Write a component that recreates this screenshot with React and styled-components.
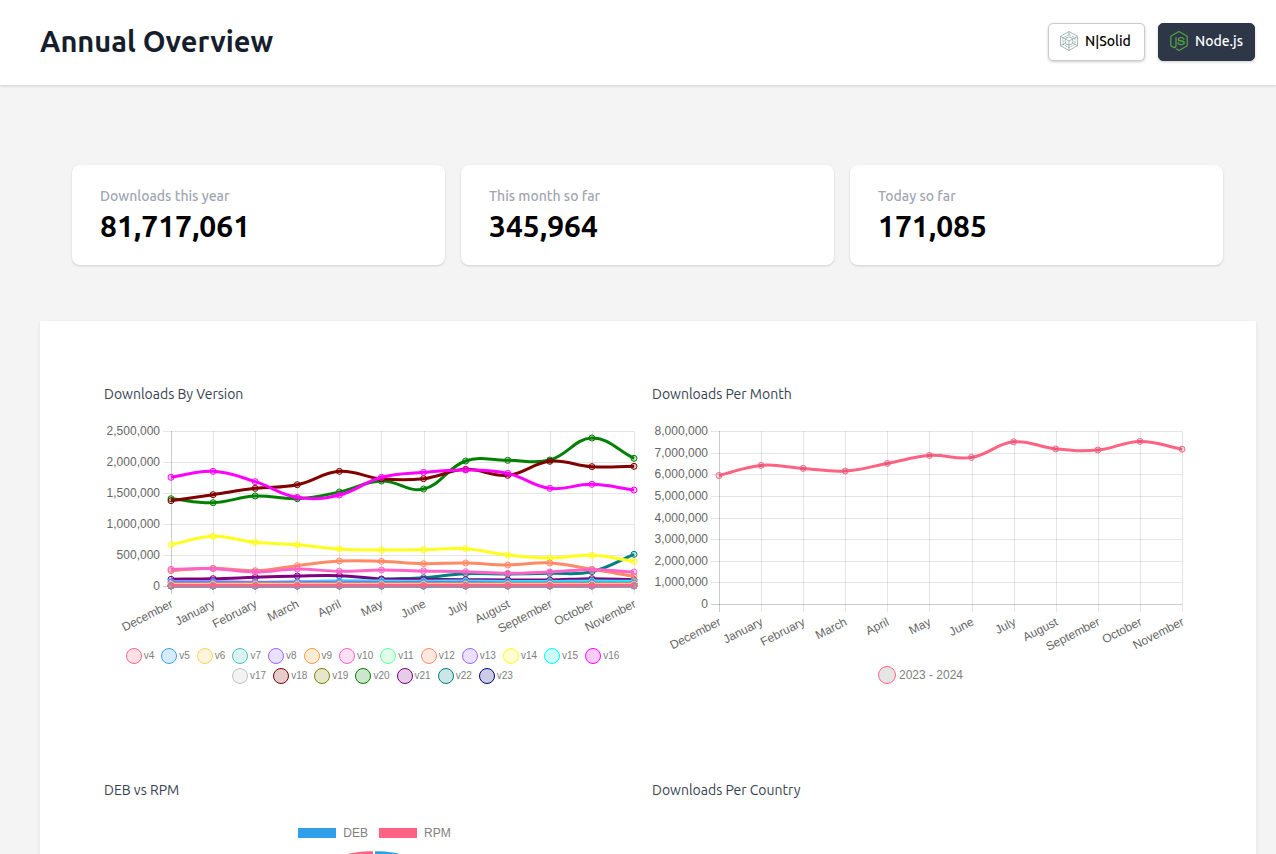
import React from 'react';
import styled, { createGlobalStyle } from 'styled-components';
import { SiNodedotjs } from 'react-icons/si';

const GlobalStyle = createGlobalStyle`
  * {
    box-sizing: border-box;
  }

  body {
    margin: 0;
    background-color: #f4f4f4;
    color: #000;
    font-family: Ubuntu, 'Noto Sans', sans-serif;
  }
`;

const Header = styled.header`
  display: flex;
  align-items: center;
  justify-content: space-between;
  padding: 23px 21px 24px 40px;
  background-color: white;
  box-shadow: 0 1px 3px rgba(0, 0, 0, 0.1), 0 1px 2px rgba(0, 0, 0, 0.06);
`;

const PageTitle = styled.h1`
  margin: 0;
  padding-bottom: 2px;
  font-size: 29px;
  line-height: 36px;
  font-weight: 600;
  color: #161e2e;
`;

const ProductSwitch = styled.nav`
  display: flex;
  gap: 13px;
`;

const ProductButton = styled.button`
  display: flex;
  align-items: center;
  gap: 6px;
  min-width: 97px;
  height: 38px;
  padding: 0 11px 2px 10px;
  border: 1px solid ${(props) => (props.$active ? '#2d3748' : '#cbcbcb')};
  border-radius: 5px;
  background-color: ${(props) => (props.$active ? '#2d3748' : 'white')};
  color: ${(props) => (props.$active ? 'white' : 'black')};
  box-shadow: 0 1px 3px rgba(0, 0, 0, 0.2);
  font-family: inherit;
  font-size: 14px;
  font-weight: 500;
`;

const Main = styled.main`
  padding: 80px 20px 0 40px;
`;

const Stats = styled.section`
  display: grid;
  grid-template-columns: repeat(3, 1fr);
  gap: 16px;
  padding: 0 33px 0 32px;
  margin-bottom: 56px;
`;

const StatCard = styled.div`
  height: 100px;
  padding: 20px 28px;
  border-radius: 8px;
  background-color: white;
  box-shadow: 0 1px 3px rgba(0, 0, 0, 0.1), 0 1px 2px rgba(0, 0, 0, 0.06);
`;

const StatLabel = styled.div`
  font-size: 14px;
  line-height: 22px;
  font-weight: 500;
  color: #9fa6b2;
`;

const StatValue = styled.div`
  font-size: 30px;
  line-height: 38px;
  font-weight: 600;
`;

const Panel = styled.section`
  display: grid;
  grid-template-columns: repeat(2, 1fr);
  gap: 84px 16px;
  padding: 62px 72px 64px 64px;
  background-color: white;
  box-shadow: 0 1px 3px rgba(0, 0, 0, 0.1);
`;

const Card = styled.article`
  min-height: 312px;
`;

const CardTitle = styled.h2`
  margin: 0 0 20px;
  font-size: 14px;
  line-height: 22px;
  font-weight: 400;
  color: #374151;
`;

const Chart = styled.svg`
  display: block;
  width: 100%;
  height: auto;
  overflow: visible;
  font-family: 'Liberation Sans', Arial, sans-serif;
  font-size: 12px;
  fill: #666;
`;

const Legend = styled.ul`
  display: flex;
  flex-wrap: wrap;
  justify-content: center;
  gap: 4px 7px;
  margin: 0;
  padding: ${(props) => (props.$large ? '0 0 0 5px' : '0 10px 0 15px')};
  list-style: none;
  font-family: 'Liberation Sans', Arial, sans-serif;
  font-size: ${(props) => (props.$large ? '12px' : '10px')};
  line-height: 16px;
  color: #808080;
`;

const LegendItem = styled.li`
  display: flex;
  align-items: center;
  gap: ${(props) => (props.$large ? '3px' : '2px')};
`;

const LegendDot = styled.span`
  width: ${(props) => (props.$large ? '18px' : '16px')};
  height: ${(props) => (props.$large ? '18px' : '16px')};
  border: 1px solid ${(props) => props.$color};
  border-radius: 50%;
  background-color: ${(props) => props.$fill};
`;

const PieLegend = styled(Legend)`
  gap: 11px;
  padding: 4px 0 0 9px;
  font-size: 12px;
`;

const PieKey = styled(LegendItem)`
  gap: 7px;
`;

const PieSwatch = styled.span`
  width: 38px;
  height: 10px;
  background-color: ${(props) => props.$color};
`;

const months = [
  'December', 'January', 'February', 'March', 'April', 'May',
  'June', 'July', 'August', 'September', 'October', 'November',
];

const flat = (value) => months.map(() => value);

// values are in thousands of downloads
const versions = [
  { name: 'v4', rgb: '255, 99, 132', data: flat(8) },
  { name: 'v5', rgb: '54, 162, 235', data: flat(0) },
  { name: 'v6', rgb: '255, 206, 86', data: flat(28) },
  { name: 'v7', rgb: '75, 192, 192', data: flat(0) },
  { name: 'v8', rgb: '153, 102, 255', data: [62, 64, 58, 60, 62, 58, 56, 55, 50, 48, 50, 46] },
  { name: 'v9', rgb: '255, 159, 64', data: flat(4) },
  { name: 'v10', rgb: '255, 99, 200', data: [269, 280, 226, 274, 237, 258, 242, 231, 204, 226, 263, 226] },
  { name: 'v11', rgb: '99, 255, 150', data: flat(2) },
  { name: 'v12', rgb: '255, 138, 101', data: [247, 285, 247, 328, 403, 398, 360, 371, 339, 371, 269, 156] },
  { name: 'v13', rgb: '153, 102, 255', data: flat(5) },
  { name: 'v14', rgb: '255, 255, 30', data: [667, 801, 704, 667, 597, 581, 586, 602, 500, 452, 495, 398] },
  { name: 'v15', rgb: '0, 255, 255', data: [70, 70, 62, 68, 86, 80, 78, 80, 72, 72, 80, 75] },
  { name: 'v16', rgb: '255, 0, 255', data: [1753, 1849, 1683, 1430, 1468, 1753, 1833, 1871, 1817, 1575, 1640, 1548] },
  { name: 'v17', rgb: '192, 192, 192', data: flat(6) },
  { name: 'v18', rgb: '128, 0, 0', data: [1376, 1473, 1575, 1634, 1849, 1728, 1731, 1882, 1785, 2011, 1925, 1930] },
  { name: 'v19', rgb: '128, 128, 0', data: flat(7) },
  { name: 'v20', rgb: '0, 128, 0', data: [1408, 1344, 1452, 1408, 1516, 1693, 1564, 2016, 2027, 2032, 2387, 2059] },
  { name: 'v21', rgb: '128, 0, 128', data: [108, 118, 140, 161, 167, 113, 108, 102, 97, 97, 118, 102] },
  { name: 'v22', rgb: '0, 128, 128', data: [0, 0, 0, 0, 20, 105, 134, 199, 193, 204, 231, 511] },
  { name: 'v23', rgb: '0, 0, 128', data: [0, 0, 0, 0, 0, 0, 0, 0, 0, 0, 5, 30] },
];

const totals = [
  {
    name: '2023 - 2024',
    rgb: '255, 99, 132',
    fill: 'rgba(0, 0, 0, 0.1)',
    data: [5940, 6410, 6270, 6150, 6500, 6870, 6780, 7500, 7170, 7120, 7520, 7160],
  },
];

const LEFT = 67;
const RIGHT = 530;
const TOP = 6;

// cubic spline through the points, with a tension of 0.4
function curve(points, bottom) {
  const limit = (y) => Math.max(TOP, Math.min(bottom, y));
  const controls = points.map((p, i) => {
    const prev = points[i - 1] || p;
    const next = points[i + 1] || p;
    const before = Math.hypot(p.x - prev.x, p.y - prev.y);
    const after = Math.hypot(next.x - p.x, next.y - p.y);
    const a = (0.4 * before) / (before + after);
    const b = (0.4 * after) / (before + after);
    return {
      inX: p.x - a * (next.x - prev.x),
      inY: limit(p.y - a * (next.y - prev.y)),
      outX: p.x + b * (next.x - prev.x),
      outY: limit(p.y + b * (next.y - prev.y)),
    };
  });
  return points
    .map((p, i) => {
      if (i === 0) return `M${p.x},${p.y}`;
      const from = controls[i - 1];
      const to = controls[i];
      return `C${from.outX},${from.outY} ${to.inX},${to.inY} ${p.x},${p.y}`;
    })
    .join(' ');
}

function LineChart({ label, series, max, step, plotHeight, height }) {
  const bottom = TOP + plotHeight;
  const x = (i) => LEFT + (i * (RIGHT - LEFT)) / (months.length - 1);
  const y = (value) => bottom - (value / max) * plotHeight;
  const ticks = [];
  for (let value = 0; value <= max; value += step) ticks.push(value);

  return (
    <Chart viewBox={`0 0 532 ${height}`} role="img" aria-label={label}>
      {ticks.map((value) => {
        const lineY = Math.round(y(value)) + 0.5;
        return (
          <g key={value}>
            <line
              x1={LEFT - 8}
              x2={RIGHT}
              y1={lineY}
              y2={lineY}
              stroke={value === 0 ? 'rgba(0,0,0,0.2)' : 'rgba(0,0,0,0.1)'}
            />
            <text x={LEFT - 11} y={y(value) + 4} textAnchor="end">
              {(value * 1000).toLocaleString('en-US')}
            </text>
          </g>
        );
      })}
      {months.map((month, i) => {
        const lineX = Math.round(x(i)) + 0.5;
        return (
          <g key={month}>
            <line
              x1={lineX}
              x2={lineX}
              y1={TOP}
              y2={bottom + 8}
              stroke={i === 0 ? 'rgba(0,0,0,0.2)' : 'rgba(0,0,0,0.1)'}
            />
            <text
              transform={`translate(${lineX}, ${bottom + 16}) rotate(-27)`}
              y="5"
              textAnchor="end"
            >
              {month}
            </text>
          </g>
        );
      })}
      {[...series].reverse().map((item) => {
        const points = item.data.map((value, i) => ({ x: x(i), y: y(value) }));
        return (
          <g key={item.name} stroke={`rgb(${item.rgb})`}>
            <path d={curve(points, bottom)} fill="none" strokeWidth="3" />
            {points.map((p, i) => (
              <circle
                key={months[i]}
                cx={p.x}
                cy={p.y}
                r="3"
                fill={item.fill || `rgba(${item.rgb}, 0.2)`}
              />
            ))}
          </g>
        );
      })}
    </Chart>
  );
}

function SeriesLegend({ series, large }) {
  return (
    <Legend $large={large}>
      {series.map((item) => (
        <LegendItem key={item.name} $large={large}>
          <LegendDot
            $large={large}
            $color={`rgb(${item.rgb})`}
            $fill={item.fill || `rgba(${item.rgb}, 0.2)`}
          />
          {item.name}
        </LegendItem>
      ))}
    </Legend>
  );
}

function NSolidIcon() {
  return (
    <svg width="20" height="20" viewBox="0 0 20 20" fill="none" stroke="#7f9c9a" strokeWidth="0.7" aria-hidden="true">
      <path d="M10 0.5 18.5 5.3V14.7L10 19.5 1.5 14.7V5.3Z" />
      <path d="M4 6.8 10 10 16 6.8M10 10V16.5" />
      <path d="M10 3.6 16 6.8V13.4L10 16.6 4 13.4V6.8Z" strokeDasharray="2.4 0.8" />
      <circle cx="10" cy="10" r="4" />
      <path d="M1.5 5.3 4 6.8M18.5 5.3 16 6.8M10 0.5V3.6M1.5 14.7 6.6 12M18.5 14.7 13.4 12M10 16.6V19.5" />
    </svg>
  );
}

function App() {
  return (
    <>
      <GlobalStyle />
      <Header>
        <PageTitle>Annual Overview</PageTitle>
        <ProductSwitch>
          <ProductButton type="button">
            <NSolidIcon />
            N|Solid
          </ProductButton>
          <ProductButton type="button" $active>
            <SiNodedotjs size={20} color="#539e43" aria-hidden="true" />
            Node.js
          </ProductButton>
        </ProductSwitch>
      </Header>
      <Main>
        <Stats>
          <StatCard>
            <StatLabel>Downloads this year</StatLabel>
            <StatValue>81,717,061</StatValue>
          </StatCard>
          <StatCard>
            <StatLabel>This month so far</StatLabel>
            <StatValue>345,964</StatValue>
          </StatCard>
          <StatCard>
            <StatLabel>Today so far</StatLabel>
            <StatValue>171,085</StatValue>
          </StatCard>
        </Stats>
        <Panel>
          <Card>
            <CardTitle>Downloads By Version</CardTitle>
            <LineChart
              label="Downloads By Version"
              series={versions}
              max={2500}
              step={500}
              plotHeight={155}
              height={223}
            />
            <SeriesLegend series={versions} />
          </Card>
          <Card>
            <CardTitle>Downloads Per Month</CardTitle>
            <LineChart
              label="Downloads Per Month"
              series={totals}
              max={8000}
              step={1000}
              plotHeight={173}
              height={241}
            />
            <SeriesLegend series={totals} large />
          </Card>
          <Card>
            <CardTitle>DEB vs RPM</CardTitle>
            <PieLegend>
              <PieKey>
                <PieSwatch $color="#2f9fe9" />
                DEB
              </PieKey>
              <PieKey>
                <PieSwatch $color="#ff6384" />
                RPM
              </PieKey>
            </PieLegend>
            <Chart viewBox="0 0 532 240" role="img" aria-label="DEB vs RPM">
              <path d="M270 9A118 118 0 0 1 270 245Z" fill="#2f9fe9" stroke="white" strokeWidth="2" />
              <path d="M270 9A118 118 0 0 0 270 245Z" fill="#ff6384" stroke="white" strokeWidth="2" />
            </Chart>
          </Card>
          <Card>
            <CardTitle>Downloads Per Country</CardTitle>
          </Card>
        </Panel>
      </Main>
    </>
  );
}

export default App;
